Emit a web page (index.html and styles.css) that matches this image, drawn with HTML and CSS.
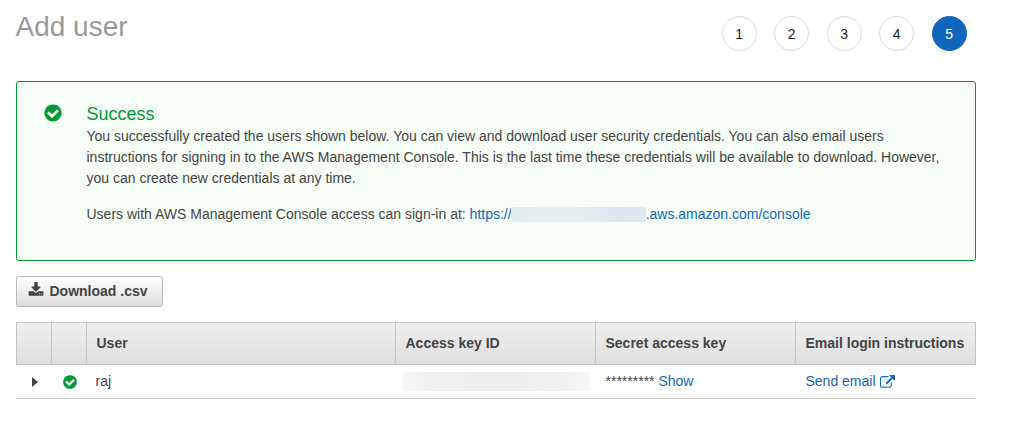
FILE: index.html
```html
<!DOCTYPE html>
<html lang="en">
<head>
<meta charset="utf-8">
<title>Add user</title>
<link rel="stylesheet" href="styles.css">
</head>
<body>
<header class="page-header">
  <h1 class="title">Add user</h1>
  <ol class="steps">
    <li class="step">1</li>
    <li class="step">2</li>
    <li class="step">3</li>
    <li class="step">4</li>
    <li class="step step-active">5</li>
  </ol>
</header>
<section class="alert">
  <svg class="alert-icon" viewBox="0 0 1792 1792"><path d="M1412 734q0-28-18-46l-91-90q-19-19-45-19t-45 19l-408 407-226-226q-19-19-45-19t-45 19l-91 90q-18 18-18 46 0 27 18 45l362 362q19 19 45 19 27 0 46-19l543-543q18-18 18-45zm252 162q0 209-103 385.500t-279.500 279.500-385.500 103-385.500-103-279.500-279.500-103-385.500 103-385.500 279.500-279.500 385.500-103 385.500 103 279.500 279.500 103 385.500z"/></svg>
  <div class="alert-body">
    <h2 class="alert-title">Success</h2>
    <p class="alert-text">You successfully created the users shown below. You can view and download user security credentials. You can also email users<br>instructions for signing in to the AWS Management Console. This is the last time these credentials will be available to download. However,<br>you can create new credentials at any time.</p>
    <p class="alert-text signin">Users with AWS Management Console access can sign-in at: <a class="link">https://<span class="redacted-url"></span>.aws.amazon.com/console</a></p>
  </div>
</section>
<button class="download" type="button">
  <svg class="download-icon" viewBox="0 0 1792 1792"><path d="M1344 1344q0-26-19-45t-45-19-45 19-19 45 19 45 45 19 45-19 19-45zm256 0q0-26-19-45t-45-19-45 19-19 45 19 45 45 19 45-19 19-45zm128-224v320q0 40-28 68t-68 28h-1472q-40 0-68-28t-28-68v-320q0-40 28-68t68-28h465l135 136q58 56 136 56t136-56l136-136h464q40 0 68 28t28 68zm-325-569q17 41-14 70l-448 448q-18 19-45 19t-45-19l-448-448q-31-29-14-70 17-39 59-39h256v-448q0-26 19-45t45-19h256q26 0 45 19t19 45v448h256q42 0 59 39z"/></svg>
  <span>Download .csv</span>
</button>
<div class="table">
  <div class="row head">
    <div class="cell"></div>
    <div class="cell"></div>
    <div class="cell">User</div>
    <div class="cell">Access key ID</div>
    <div class="cell">Secret access key</div>
    <div class="cell">Email login instructions</div>
  </div>
  <div class="row data">
    <div class="cell cell-icon"><svg class="caret" viewBox="0 0 6 10"><path d="M0 0L6 5L0 10z"/></svg></div>
    <div class="cell cell-icon"><svg class="row-check" viewBox="0 0 1792 1792"><path d="M1412 734q0-28-18-46l-91-90q-19-19-45-19t-45 19l-408 407-226-226q-19-19-45-19t-45 19l-91 90q-18 18-18 46 0 27 18 45l362 362q19 19 45 19 27 0 46-19l543-543q18-18 18-45zm252 162q0 209-103 385.500t-279.500 279.500-385.500 103-385.500-103-279.500-279.500-103-385.500 103-385.500 279.500-279.500 385.500-103 385.500 103 279.500 279.500 103 385.500z"/></svg></div>
    <div class="cell cell-user">raj</div>
    <div class="cell cell-key"><span class="redacted-key"></span></div>
    <div class="cell">*********&nbsp;<a class="link">Show</a></div>
    <div class="cell"><a class="link send">Send email<svg class="external" viewBox="0 0 1792 1792"><path d="M1408 928v320q0 119-84.500 203.500t-203.500 84.500h-832q-119 0-203.500-84.500t-84.500-203.500v-832q0-119 84.500-203.500t203.500-84.500h704q14 0 23 9t9 23v64q0 14-9 23t-23 9h-704q-66 0-113 47t-47 113v832q0 66 47 113t113 47h832q66 0 113-47t47-113v-320q0-14 9-23t23-9h64q14 0 23 9t9 23zm384-864v512q0 26-19 45t-45 19-45-19l-176-176-652 652q-10 10-23 10t-23-10l-114-114q-10-10-10-23t10-23l652-652-176-176q-19-19-19-45t19-45 45-19h512q26 0 45 19t19 45z"/></svg></a></div>
  </div>
</div>
</body>
</html>
```
FILE: styles.css
```css
* {
  box-sizing: border-box;
}

body {
  margin: 0;
  padding: 0 42px 0 16px;
  background: #fff;
  color: #444;
  font: 14px/21px "Liberation Sans", Arial, sans-serif;
}

h1, h2, p, ol {
  margin: 0;
  padding: 0;
  font-weight: normal;
}

svg {
  display: block;
  flex: none;
  fill: currentColor;
}

.page-header {
  display: flex;
  justify-content: space-between;
  height: 81px;
  padding: 11px 9.250px 0 0;
}

.title {
  margin-left: -0.500px;
  color: #999;
  font-size: 28px;
  line-height: 32px;
}

.steps {
  display: flex;
  gap: 17.500px;
  padding-top: 5px;
  list-style: none;
}

.step {
  width: 35px;
  height: 35px;
  border: 1px solid #ddd;
  border-radius: 50%;
  color: #222;
  line-height: 34px;
  text-align: center;
}

.step-active {
  border-color: #1166bb;
  background: #1166bb;
  color: #fff;
}

.alert {
  display: flex;
  gap: 23.500px;
  height: 180px;
  padding: 21px 0 0 26px;
  border: 1px solid #093;
  border-radius: 3px;
  background: #f6fef7;
}

.alert-icon {
  width: 20px;
  height: 20px;
  color: #093;
}

.alert-title {
  margin-bottom: 1px;
  color: #093;
  font-size: 18px;
  line-height: 22px;
}

.alert-text {
  white-space: nowrap;
}

.signin {
  margin-top: 15px;
}

.link {
  color: #1166bb;
}

.redacted-url {
  display: inline-block;
  width: 135px;
  height: 15px;
  margin-left: -1px;
  vertical-align: -3px;
  background: linear-gradient(100deg, #e1eef0, #e5f0f2 45%, #dae8f0 80%, #dfebf1);
}

.download {
  display: flex;
  align-items: flex-start;
  gap: 5.500px;
  width: 147px;
  height: 31px;
  margin: 15px 0;
  padding: 5px 0 0 11px;
  border: 1px solid #b8b8b8;
  border-radius: 3px;
  background: linear-gradient(#fff, #ddd);
  color: #444;
  font: bold 14px/18px "Liberation Sans", Arial, sans-serif;
  white-space: nowrap;
}

.download-icon {
  width: 16px;
  height: 16px;
}

.row {
  display: grid;
  grid-template-columns: 35px 35px 309px 200px 200px 181px;
}

.cell {
  padding-left: 9.500px;
  white-space: nowrap;
}

.head {
  height: 43px;
  border: 1px solid #c4c4c4;
  border-left: 0;
  background: linear-gradient(#eee, #dfdfdf);
  font-weight: bold;
  line-height: 41px;
}

.head .cell {
  border-left: 1px solid #c4c4c4;
}

.data {
  height: 34px;
  border-bottom: 1px solid #ccc;
  line-height: 33px;
}

.data .cell {
  display: flex;
  padding-left: 10.500px;
}

.data .cell-icon {
  align-items: center;
  justify-content: center;
  padding: 1px 0 0 2px;
}

.caret {
  width: 6px;
  height: 10px;
}

.row-check {
  width: 16px;
  height: 16px;
  color: #093;
}

.data .cell-user {
  padding-left: 9.500px;
}

.data .cell-key {
  align-items: center;
  padding-left: 8px;
}

.redacted-key {
  width: 187px;
  height: 19px;
  background: linear-gradient(90deg, #f7f7f7, #f0f0f0 12%, #eee 50%, #f0f0f0 85%, #f7f7f7);
}

.send {
  display: flex;
  gap: 4px;
}

.external {
  width: 15px;
  height: 15px;
  margin-top: 10px;
}
```
